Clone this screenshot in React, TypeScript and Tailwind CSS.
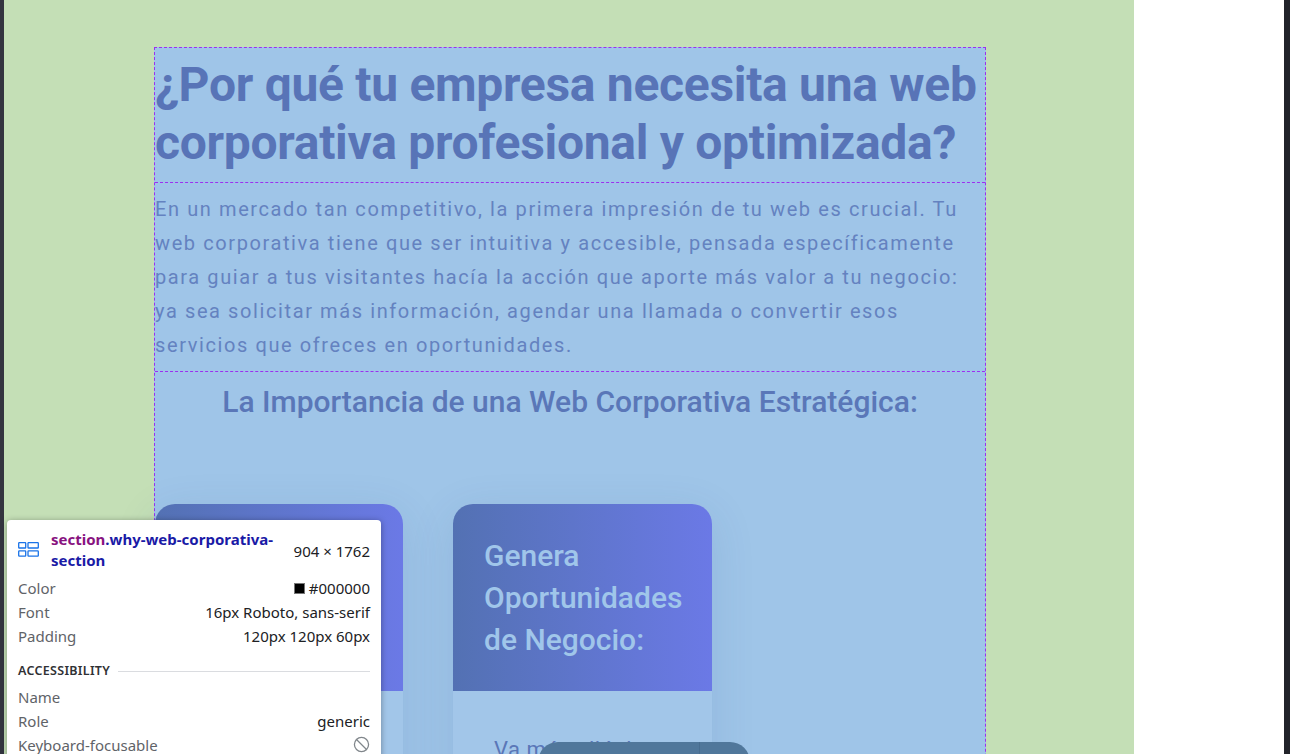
import { Ban } from 'lucide-react'

function FlexIcon() {
  return (
    <svg width="21" height="15" viewBox="0 0 21 15" fill="none" stroke="#1a73e8" strokeWidth="1.3">
      <rect x="0.7" y="0.7" width="7" height="5.3" rx="0.6" />
      <rect x="10" y="0.7" width="10.3" height="5.3" rx="0.6" />
      <rect x="0.7" y="8.8" width="7" height="5.3" rx="0.6" />
      <rect x="10" y="8.8" width="10.3" height="5.3" rx="0.6" />
    </svg>
  )
}

function Row({ label, children }: { label: string; children?: React.ReactNode }) {
  return (
    <div className="flex h-6 items-center justify-between">
      <span className="text-[#5f6368]">{label}</span>
      <span className="flex items-center gap-1 text-[#202124]">{children}</span>
    </div>
  )
}

function Inspector() {
  return (
    <div
      className="absolute left-[7px] top-[520px] w-[374px] h-[260px] rounded-[4px] bg-white px-[11px] pt-[9px] shadow-[0_1px_6px_rgba(0,0,0,0.35)]"
      style={{ fontFamily: '"Noto Sans", "Open Sans", sans-serif' }}
    >
      <div className="flex items-start justify-between">
        <div className="flex items-start gap-[12px]">
          <div className="pt-[13px]">
            <FlexIcon />
          </div>
          <div className="text-[15px] font-bold leading-[21px]">
            <span className="text-[#881280]">section</span>
            <span className="text-[#1a1aa6]">.why-web-corporativa-</span>
            <br />
            <span className="text-[#1a1aa6]">section</span>
          </div>
        </div>
        <span className="pt-[11px] text-[15px] text-[#202124]">904 × 1762</span>
      </div>
      <div className="mt-[5px] text-[15px]">
        <Row label="Color">
          <span className="inline-block h-[11px] w-[11px] border border-[#777] bg-black" />
          #000000
        </Row>
        <Row label="Font">16px Roboto, sans-serif</Row>
        <Row label="Padding">120px 120px 60px</Row>
      </div>
      <div className="mt-[14px] flex items-center gap-2">
        <span className="text-[12.5px] font-semibold tracking-[0.3px] text-[#303134]">ACCESSIBILITY</span>
        <div className="h-px flex-1 bg-[#dadce0]" />
      </div>
      <div className="mt-[4px] text-[15px]">
        <Row label="Name" />
        <Row label="Role">generic</Row>
        <Row label="Keyboard-focusable">
          <Ban className="h-[17px] w-[17px] text-[#80868b]" strokeWidth={1.8} />
        </Row>
      </div>
    </div>
  )
}

function Card({ width, title, body }: { width: string; title: string[]; body: string }) {
  return (
    <div className={`${width} h-[300px] shrink-0 overflow-hidden rounded-t-[20px] bg-[#a2c6e9] shadow-[0_10px_45px_rgba(40,70,140,0.12)]`}>
      <div className="h-[187px] bg-gradient-to-r from-[#5371b3] to-[#6b79e6] px-[31px] pt-[31px]">
        <h4 className="text-[30px] font-medium leading-[42px] text-[#a0c6ea]">
          {title.map((t) => (
            <div key={t}>{t}</div>
          ))}
        </h4>
      </div>
      <p className="px-[41px] pt-[42px] text-[22px] leading-[34px] tracking-[0.5px] text-[#5a77b8]">{body}</p>
    </div>
  )
}

export default function App() {
  return (
    <div
      className="relative flex h-[754px] w-[1290px] overflow-hidden bg-white"
      style={{ fontFamily: 'Roboto, "Liberation Sans", sans-serif' }}
    >
      <div className="w-[4px] shrink-0 bg-[#33353f]" />
      <div className="w-[1130px] shrink-0 bg-[#c4dfb6] pl-[150px] pt-[47px]">
        <section className="h-[800px] w-[832px] border-x border-t border-dashed border-[#9b30f0] bg-[#9fc5e8]">
          <div className="border-b border-dashed border-[#9b30f0] pb-[10px] pt-[8px]">
            <h2 className="text-[48px] font-bold leading-[58px] tracking-[-0.3px] text-[#5874b7]">
              ¿Por qué tu empresa necesita una web corporativa profesional y optimizada?
            </h2>
          </div>
          <div className="border-b border-dashed border-[#9b30f0] pb-[9px] pt-[9px]">
            <p className="text-[20px] leading-[34px] tracking-[1.6px] text-[#6482c0]">
              En un mercado tan competitivo, la primera impresión de tu web es crucial. Tu web corporativa tiene que
              ser intuitiva y accesible, pensada específicamente para guiar a tus visitantes hacía la acción que
              aporte más valor a tu negocio: ya sea solicitar más información, agendar una llamada o convertir esos
              servicios que ofreces en oportunidades.
            </p>
          </div>
          <h3 className="pt-[12px] text-center text-[30px] font-medium leading-[36px] text-[#5a77b8]">
            La Importancia de una Web Corporativa Estratégica:
          </h3>
          <div className="mt-[84px] flex gap-[50px]">
            <Card width="w-[248px]" title={['Aumenta', 'la Confianza', 'de Clientes:']} body="Una web profesional" />
            <Card width="w-[259px]" title={['Genera', 'Oportunidades', 'de Negocio:']} body="Va más allá de" />
          </div>
        </section>
      </div>
      <div className="flex-1 bg-white" />
      <div className="w-[6px] shrink-0 bg-[#22232a]" />

      <div className="absolute left-[538px] top-[742px] flex h-[40px] w-[212px] rounded-t-[20px] bg-[#50779b]">
        <div className="w-[162px] border-r border-[#486d90]" />
      </div>

      <Inspector />
    </div>
  )
}
